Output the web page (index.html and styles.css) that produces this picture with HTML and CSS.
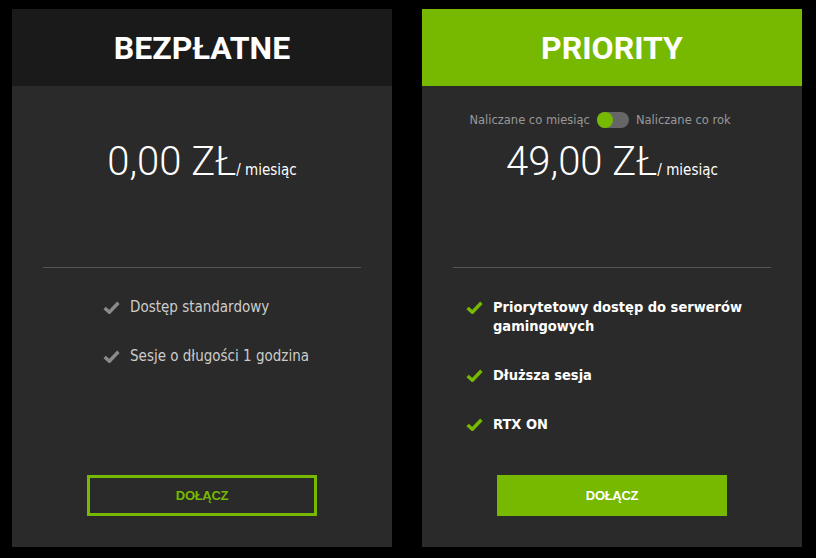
FILE: index.html
```html
<!DOCTYPE html>
<html lang="pl">
<head>
    <meta charset="UTF-8">
    <meta name="viewport" content="width=device-width, initial-scale=1.0">
    <title>Plany</title>
    <link rel="stylesheet" href="styles.css">
</head>
<body>
    <div class="plans">
        <div class="plan">
            <div class="plan-header">BEZPŁATNE</div>
            <div class="plan-top">
                <div class="billing billing-empty"></div>
                <div class="price">0,00 ZŁ<span class="per">/ miesiąc</span></div>
            </div>
            <ul class="features">
                <li>
                    <svg class="check" viewBox="0 0 16 12"><path d="M1.5 6.5 L6 10.5 L14.5 1.5"/></svg>
                    <span>Dostęp standardowy</span>
                </li>
                <li>
                    <svg class="check" viewBox="0 0 16 12"><path d="M1.5 6.5 L6 10.5 L14.5 1.5"/></svg>
                    <span>Sesje o długości 1 godzina</span>
                </li>
            </ul>
            <a class="btn btn-outline" href="#">DOŁĄCZ</a>
        </div>

        <div class="plan plan-priority">
            <div class="plan-header">PRIORITY</div>
            <div class="plan-top">
                <div class="billing">
                    <span>Naliczane co miesiąc</span>
                    <span class="switch"><span class="knob"></span></span>
                    <span>Naliczane co rok</span>
                </div>
                <div class="price">49,00 ZŁ<span class="per">/ miesiąc</span></div>
            </div>
            <ul class="features">
                <li>
                    <svg class="check" viewBox="0 0 16 12"><path d="M1.5 6.5 L6 10.5 L14.5 1.5"/></svg>
                    <span>Priorytetowy dostęp do serwerów gamingowych</span>
                </li>
                <li>
                    <svg class="check" viewBox="0 0 16 12"><path d="M1.5 6.5 L6 10.5 L14.5 1.5"/></svg>
                    <span>Dłuższa sesja</span>
                </li>
                <li>
                    <svg class="check" viewBox="0 0 16 12"><path d="M1.5 6.5 L6 10.5 L14.5 1.5"/></svg>
                    <span>RTX ON</span>
                </li>
            </ul>
            <a class="btn btn-solid" href="#">DOŁĄCZ</a>
        </div>
    </div>
</body>
</html>
```

FILE: styles.css
```css
body {
    margin: 0;
    background-color: #000;
    font-family: "DejaVu Sans Condensed", "DejaVu Sans", sans-serif;
    color: #fff;
}
.plans {
    display: flex;
    gap: 30px;
    padding: 9px 12px;
}
.plan {
    width: 380px;
    height: 538px;
    background-color: #2a2a2a;
    display: flex;
    flex-direction: column;
}
.plan-header {
    height: 77px;
    background-color: #1a1a1a;
    display: flex;
    align-items: center;
    justify-content: center;
    font-family: Roboto, sans-serif;
    font-weight: 700;
    font-size: 32px;
}
.plan-priority .plan-header {
    background-color: #76b900;
}
.plan-top {
    height: 182px;
    margin: 0 31px;
    border-bottom: 1px solid #555;
    box-sizing: border-box;
    padding-top: 25px;
    text-align: center;
}
.billing {
    height: 18px;
    display: flex;
    align-items: center;
    justify-content: center;
    gap: 7px;
    padding-right: 24px;
    font-family: "DejaVu Sans", sans-serif;
    font-size: 11.5px;
    color: #999;
}
.switch {
    position: relative;
    width: 32px;
    height: 16px;
    border-radius: 8px;
    background-color: #666;
}
.knob {
    position: absolute;
    left: 0;
    top: 0;
    width: 16px;
    height: 16px;
    border-radius: 50%;
    background-color: #76b900;
}
.price {
    margin-top: 9px;
    font-family: Roboto, sans-serif;
    font-weight: 300;
    font-size: 40px;
    line-height: 48px;
}
.per {
    font-family: "DejaVu Sans Condensed", sans-serif;
    font-weight: 400;
    font-size: 15px;
}
.features {
    flex: 1;
    list-style: none;
    margin: 0;
    padding: 30px 0 0;
}
.features li {
    display: flex;
    align-items: flex-start;
    gap: 10px;
    margin-bottom: 30px;
    font-size: 15px;
    line-height: 19px;
    color: #ccc;
}
.plan .features {
    padding-left: 91px;
}
.plan-priority .features {
    padding-left: 44px;
    padding-right: 40px;
}
.plan-priority .features li {
    color: #fff;
    font-weight: 700;
    font-size: 14.5px;
}
.check {
    flex: none;
    width: 17px;
    height: 13px;
    margin-top: 3px;
    fill: none;
    stroke: #8a8a8a;
    stroke-width: 3.2;
}
.plan-priority .check {
    stroke: #76b900;
}
.btn {
    display: flex;
    align-items: center;
    justify-content: center;
    width: 230px;
    height: 41px;
    box-sizing: border-box;
    margin: 0 auto 31px;
    text-decoration: none;
    font-family: "Liberation Sans", sans-serif;
    font-weight: 700;
    font-size: 13px;
    letter-spacing: -0.3px;
}
.btn-outline {
    border: 3px solid #76b900;
    color: #76b900;
}
.btn-solid {
    background-color: #76b900;
    color: #fff;
}
```
